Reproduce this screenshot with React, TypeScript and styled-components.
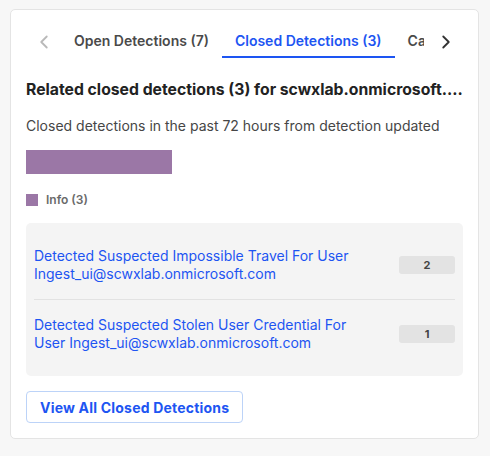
import React from 'react';
import styled, { createGlobalStyle } from 'styled-components';
import { ChevronLeft, ChevronRight } from 'lucide-react';

const GlobalStyle = createGlobalStyle`
  html, body {
    margin: 0;
    padding: 0;
    background: #f7f7f7;
    font-family: Inter, "Noto Sans", "Liberation Sans", sans-serif;
    -webkit-font-smoothing: antialiased;
  }
  #root {
    padding: 9px 11px 16px 10px;
  }
`;

const Panel = styled.section`
  background: #ffffff;
  border: 1px solid #e4e4e4;
  border-radius: 5px;
  padding: 15px 15px 15px 15px;
  box-sizing: border-box;
  width: 469px;
`;

const TabBar = styled.div`
  display: flex;
  align-items: center;
  height: 33px;
`;

const ArrowButton = styled.button<{ disabled?: boolean }>`
  width: 35px;
  height: 33px;
  display: flex;
  align-items: center;
  justify-content: center;
  padding: 0;
  border: none;
  background: transparent;
  color: ${p => (p.disabled ? '#b9b9b9' : '#333333')};
  flex-shrink: 0;
`;

const TabList = styled.div`
  flex: 1;
  display: flex;
  overflow: hidden;
  height: 33px;
  margin-right: 4px;
`;

const Tab = styled.div<{ active?: boolean }>`
  flex-shrink: 0;
  padding: 0 13px;
  height: 33px;
  box-sizing: border-box;
  display: flex;
  align-items: center;
  font-size: 14px;
  font-weight: 600;
  color: ${p => (p.active ? '#1d55f2' : '#4a4a4a')};
  border-bottom: 2px solid ${p => (p.active ? '#1d55f2' : 'transparent')};
  white-space: nowrap;
`;

const Heading = styled.h3`
  margin: 20px 0 0;
  font-size: 15.75px;
  line-height: 24px;
  font-weight: 700;
  color: #222222;
  white-space: nowrap;
  overflow: hidden;
  text-overflow: ellipsis;
`;

const Subtitle = styled.p`
  margin: 13px 0 0;
  font-size: 14px;
  line-height: 22px;
  color: #464646;
`;

const BarTrack = styled.div`
  margin-top: 13px;
  display: flex;
  height: 24px;
`;

const BarSegment = styled.div<{ color: string }>`
  background: ${p => p.color};
  height: 100%;
`;

const Legend = styled.div`
  margin-top: 18px;
  display: flex;
  align-items: center;
  gap: 8px;
  font-size: 12px;
  font-weight: 600;
  color: #6a6a6a;
  line-height: 16px;
`;

const Swatch = styled.span<{ color: string }>`
  width: 12px;
  height: 12px;
  background: ${p => p.color};
  display: inline-block;
`;

const DetectionList = styled.ul`
  list-style: none;
  margin: 15px 0 0;
  padding: 8px;
  background: #f4f4f4;
  border-radius: 5px;
`;

const DetectionRow = styled.li`
  display: flex;
  align-items: center;
  justify-content: space-between;
  gap: 24px;
  padding: 16px 0;
  & + & {
    border-top: 1px solid #e2e2e2;
  }
`;

const DetectionLink = styled.a`
  font-size: 14px;
  line-height: 18px;
  color: #1d55f2;
  text-decoration: none;
  max-width: 340px;
`;

const CountBadge = styled.span`
  width: 56px;
  height: 18px;
  border-radius: 3px;
  background: #e3e3e3;
  color: #444444;
  font-size: 11px;
  font-weight: 700;
  display: flex;
  align-items: center;
  justify-content: center;
  flex-shrink: 0;
`;

const ViewAllButton = styled.button`
  margin-top: 15px;
  height: 32px;
  padding: 0 13px;
  background: #ffffff;
  border: 1px solid #bcd3f8;
  border-radius: 4px;
  color: #1d55f2;
  font-family: inherit;
  font-size: 14px;
  font-weight: 700;
  letter-spacing: 0.2px;
`;

const detections = [
  { title: 'Detected Suspected Impossible Travel For User Ingest_ui@scwxlab.onmicrosoft.com', count: 2 },
  { title: 'Detected Suspected Stolen User Credential For User Ingest_ui@scwxlab.onmicrosoft.com', count: 1 },
];

const App: React.FC = () => {
  return (
    <>
      <GlobalStyle />
      <Panel>
        <TabBar>
          <ArrowButton disabled>
            <ChevronLeft size={22} strokeWidth={2} />
          </ArrowButton>
          <TabList>
            <Tab>Open Detections (7)</Tab>
            <Tab active>Closed Detections (3)</Tab>
            <Tab>Cases (2)</Tab>
          </TabList>
          <ArrowButton>
            <ChevronRight size={22} strokeWidth={2} />
          </ArrowButton>
        </TabBar>

        <Heading>Related closed detections (3) for scwxlab.onmicrosoft.com</Heading>
        <Subtitle>Closed detections in the past 72 hours from detection updated</Subtitle>

        <BarTrack>
          <BarSegment color="#9b77a6" style={{ width: 146 }} />
        </BarTrack>

        <Legend>
          <Swatch color="#9b77a6" />
          Info (3)
        </Legend>

        <DetectionList>
          {detections.map(d => (
            <DetectionRow key={d.title}>
              <DetectionLink href="#">{d.title}</DetectionLink>
              <CountBadge>{d.count}</CountBadge>
            </DetectionRow>
          ))}
        </DetectionList>

        <ViewAllButton>View All Closed Detections</ViewAllButton>
      </Panel>
    </>
  );
};

export default App;
